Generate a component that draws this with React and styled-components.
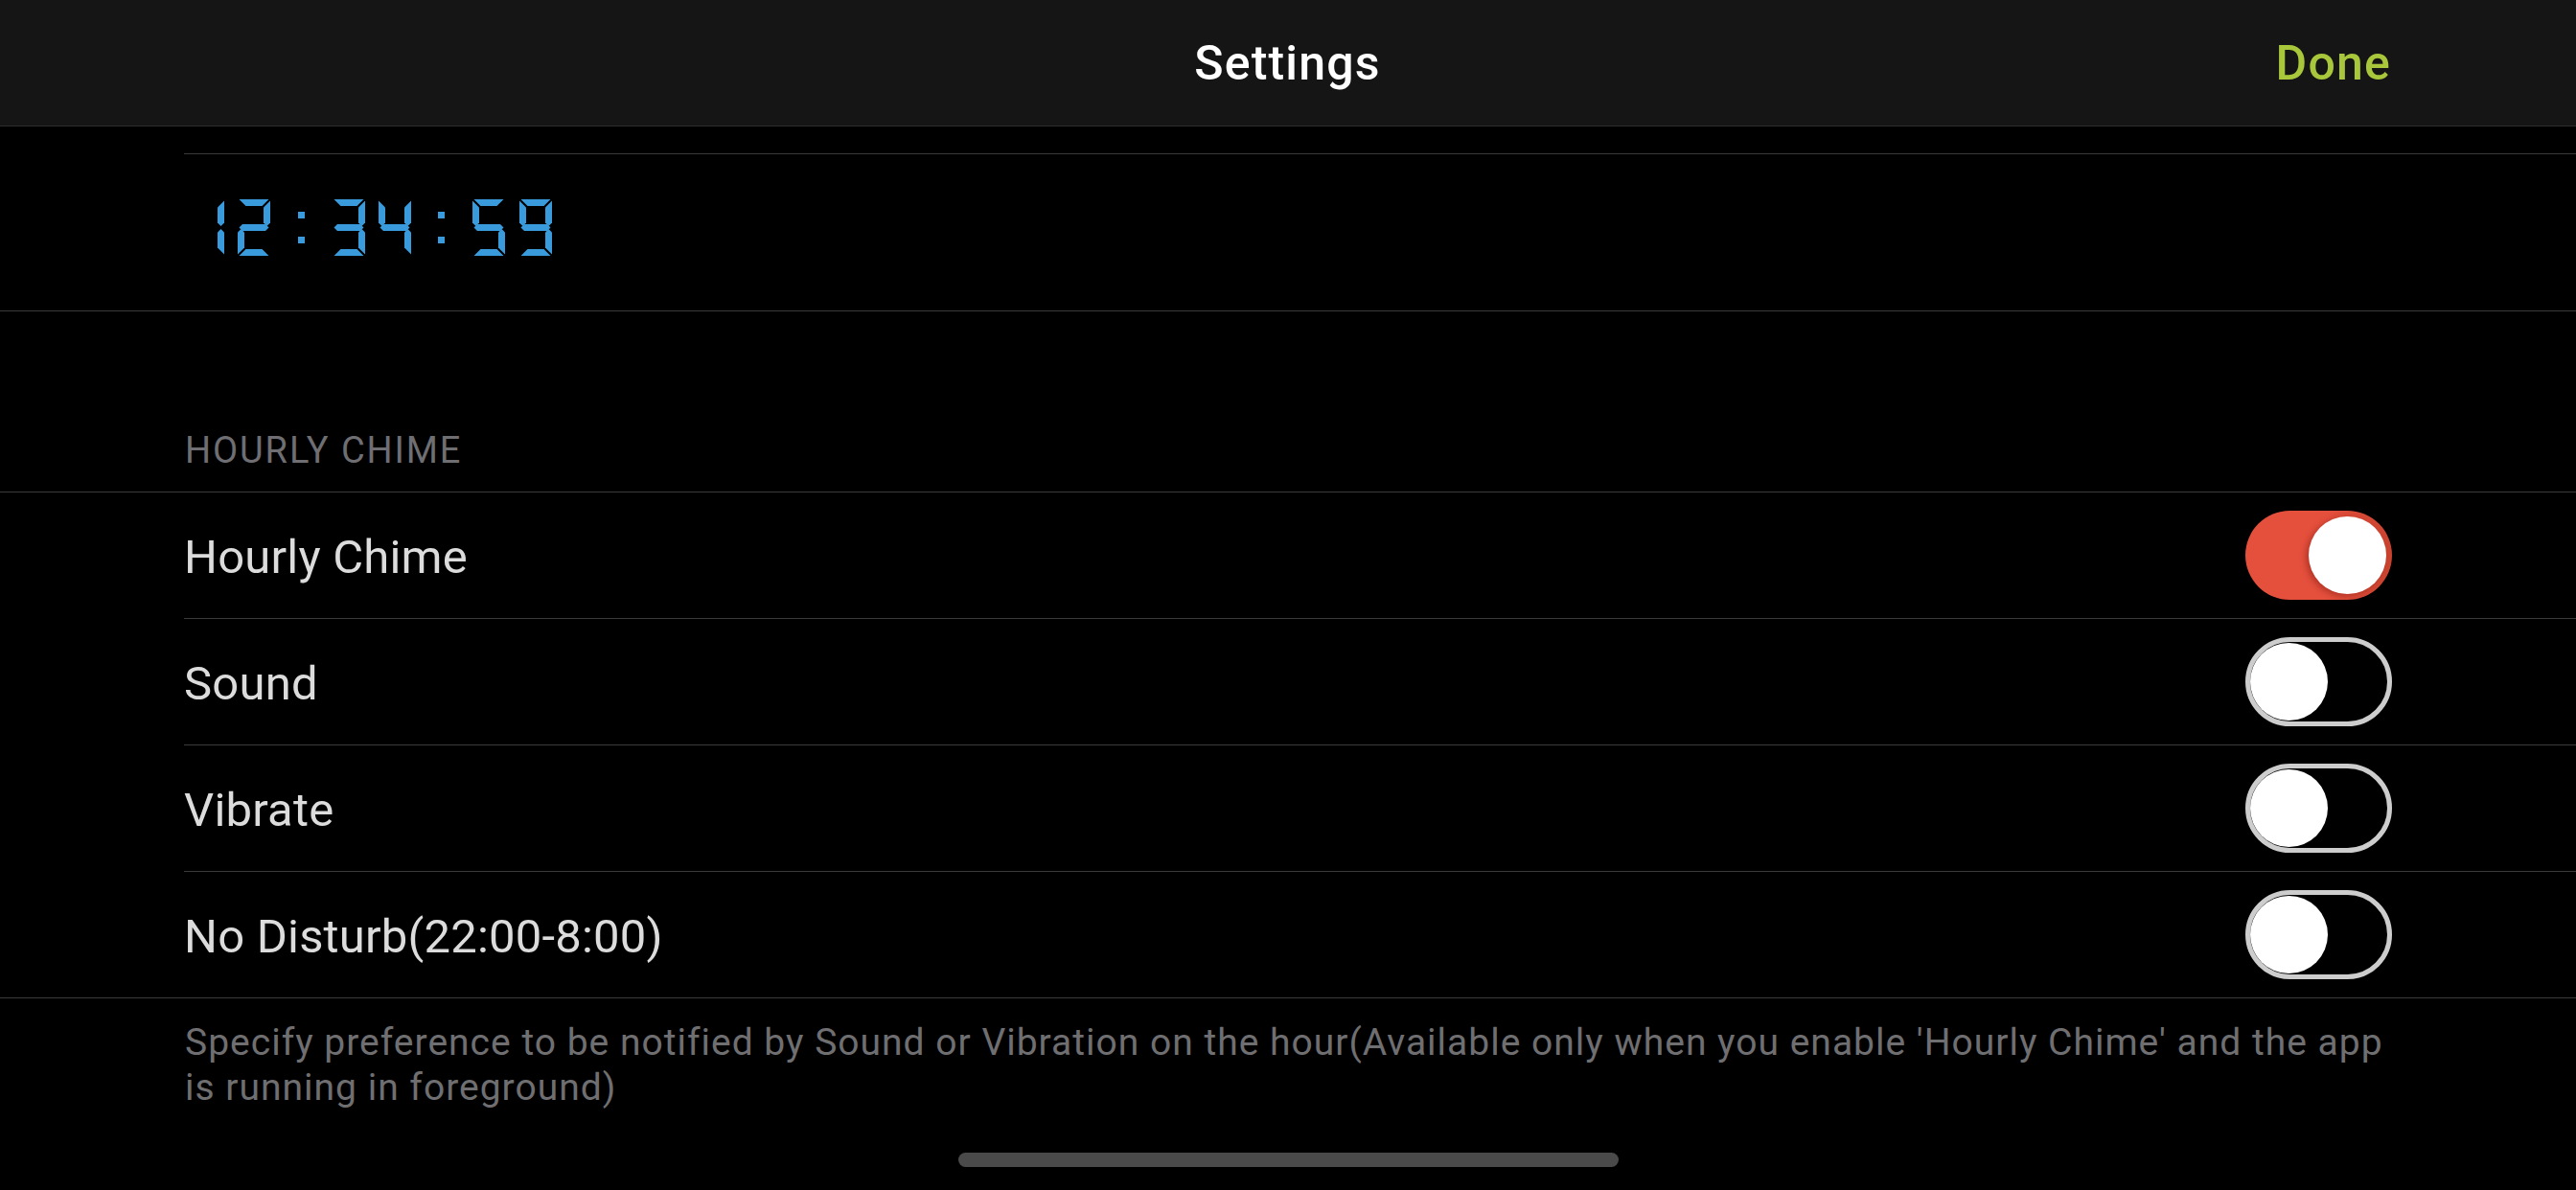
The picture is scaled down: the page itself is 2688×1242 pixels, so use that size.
import React from 'react'
import styled, { createGlobalStyle } from 'styled-components'

const GlobalStyle = createGlobalStyle`
  html, body {
    margin: 0;
    padding: 0;
    background: #000;
  }
  body {
    font-family: Roboto, "Liberation Sans", sans-serif;
    -webkit-font-smoothing: antialiased;
  }
`

const W = 34
const H = 59
const T = 7
const G = 1.5

const SEGMENTS = {
  a: [[G, 0], [W - G, 0], [W - G - T, T], [G + T, T]],
  d: [[G, H], [W - G, H], [W - G - T, H - T], [G + T, H - T]],
  g: [[G, H / 2], [G + T / 2, H / 2 - T / 2], [W - G - T / 2, H / 2 - T / 2], [W - G, H / 2], [W - G - T / 2, H / 2 + T / 2], [G + T / 2, H / 2 + T / 2]],
  f: [[0, G], [T, G + T], [T, H / 2 - T / 2 - G], [T / 2, H / 2 - G], [0, H / 2 - T / 2 - G]],
  b: [[W, G], [W - T, G + T], [W - T, H / 2 - T / 2 - G], [W - T / 2, H / 2 - G], [W, H / 2 - T / 2 - G]],
  e: [[0, H - G], [T, H - G - T], [T, H / 2 + T / 2 + G], [T / 2, H / 2 + G], [0, H / 2 + T / 2 + G]],
  c: [[W, H - G], [W - T, H - G - T], [W - T, H / 2 + T / 2 + G], [W - T / 2, H / 2 + G], [W, H / 2 + T / 2 + G]],
}

const DIGITS = {
  '0': 'abcdef',
  '1': 'bc',
  '2': 'abged',
  '3': 'abgcd',
  '4': 'fgbc',
  '5': 'afgcd',
  '6': 'afgedc',
  '7': 'abc',
  '8': 'abcdefg',
  '9': 'abcdfg',
}

// x offsets of each glyph inside the clock drawing
const LAYOUT = [
  { ch: '1', x: 0 },
  { ch: '2', x: 48 },
  { ch: ':', x: 111 },
  { ch: '3', x: 147 },
  { ch: '4', x: 195 },
  { ch: ':', x: 257 },
  { ch: '5', x: 293 },
  { ch: '9', x: 342 },
]

function SegmentClock() {
  return (
    <svg width="377" height={H} viewBox={`0 0 377 ${H}`} aria-label="12:34:59">
      {LAYOUT.map((item, i) => {
        if (item.ch === ':') {
          return (
            <g key={i} fill="#3a9bdc">
              <rect x={item.x} y={13} width={7} height={7} />
              <rect x={item.x} y={39} width={7} height={7} />
            </g>
          )
        }
        return (
          <g key={i} transform={`translate(${item.x} 0)`} fill="#3a9bdc">
            {DIGITS[item.ch].split('').map(s => (
              <polygon key={s} points={SEGMENTS[s].map(p => p.join(',')).join(' ')} />
            ))}
          </g>
        )
      })}
    </svg>
  )
}

function Toggle({ on }) {
  return (
    <Track $on={on}>
      <Knob $on={on} />
    </Track>
  )
}

const rows = [
  { label: 'Hourly Chime', on: true },
  { label: 'Sound', on: false },
  { label: 'Vibrate', on: false },
  { label: 'No Disturb(22:00-8:00)', on: false },
]

export default function App() {
  return (
    <>
      <GlobalStyle />
      <Screen>
        <NavBar>
          <span />
          <Title>Settings</Title>
          <DoneButton>Done</DoneButton>
        </NavBar>

        <ClockSection>
          <ClockRow>
            <SegmentClock />
          </ClockRow>
        </ClockSection>

        <SectionHeader>HOURLY CHIME</SectionHeader>

        <Group>
          {rows.map((r, i) => (
            <Row key={r.label} $last={i === rows.length - 1}>
              <RowLabel>{r.label}</RowLabel>
              <Toggle on={r.on} />
            </Row>
          ))}
        </Group>

        <Footer>
          Specify preference to be notified by Sound or Vibration on the hour(Available only when you enable 'Hourly Chime' and the app is running in foreground)
        </Footer>

        <HomeIndicator />
      </Screen>
    </>
  )
}

const Screen = styled.div`
  width: 2688px;
  height: 1242px;
  background: #000;
  display: flex;
  flex-direction: column;
  overflow: hidden;
`

const NavBar = styled.div`
  height: 131px;
  flex-shrink: 0;
  background: #151515;
  border-bottom: 1px solid #2e2e2e;
  display: grid;
  grid-template-columns: 1fr auto 1fr;
  align-items: center;
  padding: 0 193px 0 192px;
`

const Title = styled.div`
  color: #fff;
  font-size: 50px;
  font-weight: 500;
  letter-spacing: 1.2px;
`

const DoneButton = styled.div`
  justify-self: end;
  color: #a9c73b;
  font-size: 50px;
  font-weight: 500;
  letter-spacing: 1.2px;
`

const ClockSection = styled.div`
  margin-top: 28px;
  border-bottom: 1px solid #3a3a3a;
`

const ClockRow = styled.div`
  margin-left: 192px;
  height: 164px;
  box-sizing: border-box;
  border-top: 1px solid #3a3a3a;
  padding: 47px 0 0 8px;
  display: flex;
  align-items: flex-start;
`

const SectionHeader = styled.div`
  height: 188px;
  box-sizing: border-box;
  display: flex;
  align-items: flex-end;
  padding: 0 0 24px 193px;
  color: #6e6e73;
  font-size: 38px;
  line-height: 38px;
  letter-spacing: 1.9px;
`

const Group = styled.div`
  border-top: 1px solid #3a3a3a;
  border-bottom: 1px solid #3a3a3a;
`

const Row = styled.div`
  height: 131px;
  margin-left: 192px;
  padding-right: 192px;
  display: flex;
  align-items: center;
  justify-content: space-between;
  border-bottom: ${p => (p.$last ? 'none' : '1px solid #3a3a3a')};
`

const RowLabel = styled.div`
  color: #dcdcdc;
  font-size: 49px;
  padding-top: 4px;
  letter-spacing: 0.2px;
`

const Track = styled.div`
  width: 153px;
  height: 93px;
  box-sizing: border-box;
  border-radius: 47px;
  display: flex;
  align-items: center;
  justify-content: ${p => (p.$on ? 'flex-end' : 'flex-start')};
  padding: ${p => (p.$on ? '0 6px' : '0')};
  background: ${p => (p.$on ? 'linear-gradient(90deg, #e5503d 55%, #c9432f 100%)' : 'transparent')};
  border: ${p => (p.$on ? 'none' : '5px solid #cdcdcd')};
`

const Knob = styled.div`
  width: 81px;
  height: 81px;
  border-radius: 50%;
  background: #fff;
  box-shadow: ${p => (p.$on ? '-3px 2px 6px rgba(120, 20, 10, 0.45)' : '0 0 0 0.5px rgba(0,0,0,0.1)')};
`

const Footer = styled.div`
  padding: 23px 182px 0 193px;
  color: #6f6f72;
  font-size: 39px;
  line-height: 47px;
  letter-spacing: 1px;
`

const HomeIndicator = styled.div`
  margin: auto auto 24px;
  width: 689px;
  height: 15px;
  border-radius: 8px;
  background: #4a4a4a;
  flex-shrink: 0;
`
